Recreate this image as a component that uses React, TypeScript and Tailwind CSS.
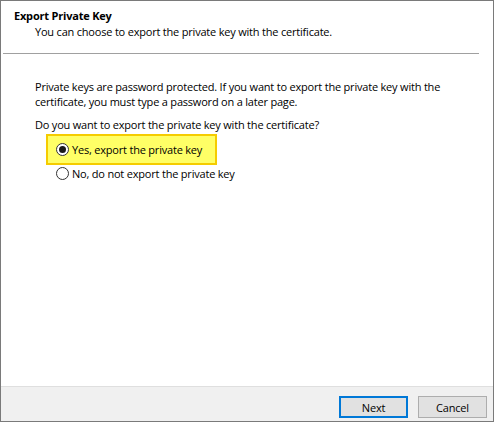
import React, { useState } from "react";

function Radio({ checked }: { checked: boolean }) {
  return (
    <svg width="13" height="13" viewBox="0 0 13 13" className="shrink-0">
      <circle cx="6.5" cy="6.5" r="6" fill="#ffffff" stroke="#333333" strokeWidth="1" />
      {checked && <circle cx="6.5" cy="6.5" r="3.5" fill="#1a1a1a" />}
    </svg>
  );
}

export default function App() {
  const [exportKey, setExportKey] = useState(true);

  return (
    <div
      className="w-[494px] h-[422px] flex flex-col bg-white border border-[#7a7a7a] text-[11px] tracking-[-0.2px] leading-[15px] text-black"
      style={{ fontFamily: '"Open Sans", "Noto Sans", sans-serif' }}
    >
      {/* Header */}
      <div className="pl-[13px] pt-[7px] h-[52px]">
        <div className="font-bold">Export Private Key</div>
        <div className="pl-[21px] pt-[1px]">You can choose to export the private key with the certificate.</div>
      </div>
      <div className="ml-[2px] w-[476px] h-px bg-[#a0a0a0]" />

      {/* Body */}
      <div className="flex-1 pl-[34px] pt-[25px]">
        <p className="whitespace-nowrap">
          Private keys are password protected. If you want to export the private key with the
          <br />
          certificate, you must type a password on a later page.
        </p>
        <p className="mt-[8px]">Do you want to export the private key with the certificate?</p>

        <div className="mt-[2px] ml-[11px] flex flex-col">
          <button
            onClick={() => setExportKey(true)}
            className={`w-[171px] h-[31px] flex items-center gap-[3px] pl-[8px] border-2 text-left whitespace-nowrap ${
              exportKey ? "bg-[#ffff66] border-[#f5cc00]" : "border-transparent"
            }`}
          >
            <Radio checked={exportKey} />
            <span>Yes, export the private key</span>
          </button>
          <button
            onClick={() => setExportKey(false)}
            className="mt-[-2px] h-[20px] flex items-center gap-[3px] pl-[10px] text-left whitespace-nowrap"
          >
            <Radio checked={!exportKey} />
            <span>No, do not export the private key</span>
          </button>
        </div>
      </div>

      {/* Footer */}
      <div className="h-[35px] bg-[#f0f0f0] border-t border-[#dfdfdf] flex justify-end items-start pt-[9px] pr-[6px] gap-[10px]">
        <button className="w-[69px] h-[22px] bg-[#e1e1e1] border-2 border-[#0078d7]">Next</button>
        <button className="w-[69px] h-[22px] bg-[#e1e1e1] border border-[#adadad]">Cancel</button>
      </div>
    </div>
  );
}
